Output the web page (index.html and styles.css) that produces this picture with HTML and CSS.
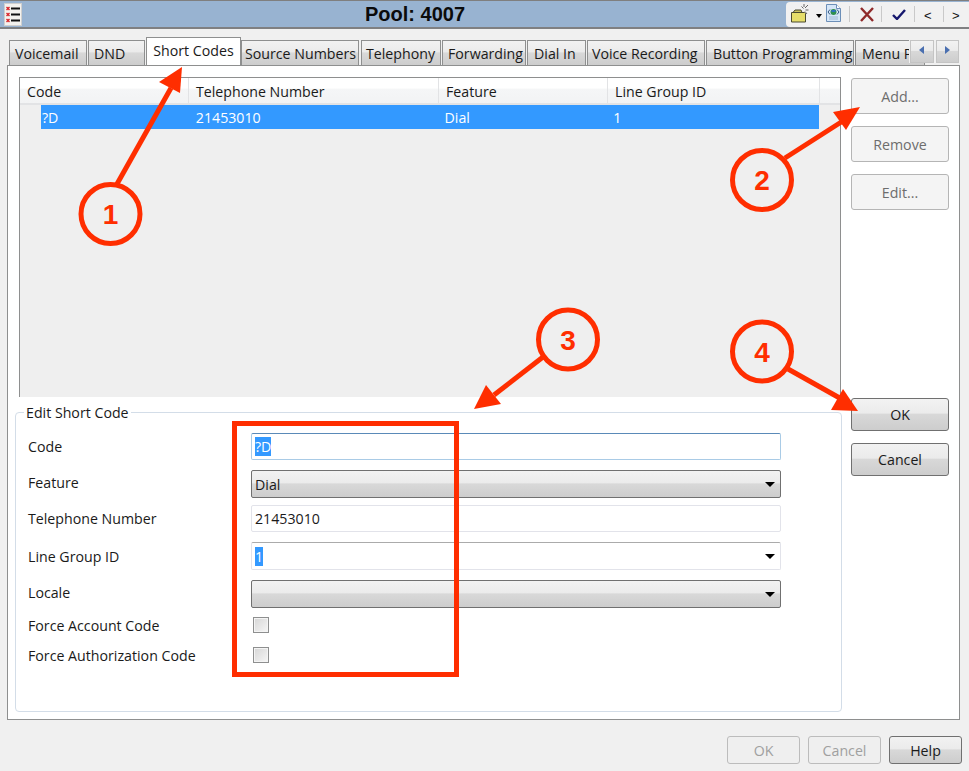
FILE: index.html
```html
<!DOCTYPE html>
<html lang="en">
<head>
<meta charset="utf-8">
<title>Pool: 4007</title>
<link rel="stylesheet" href="styles.css">
</head>
<body>
<div class="window">
  <header class="titlebar">
    <svg class="menu-icon" width="18" height="23" viewBox="0 0 18 23">
      <rect x="0.5" y="0.5" width="17" height="22" fill="#f4f2ee" stroke="#cfcfcf"/>
      <path d="M2.500 4l3 3m0-3l-3 3M2.500 10l3 3m0-3l-3 3M2.500 16l3 3m0-3l-3 3" stroke="#d8262c" stroke-width="1.400" fill="none"/>
      <path d="M7 5.500h9M7 11.500h9M7 17.500h9" stroke="#111" stroke-width="2" fill="none"/>
    </svg>
    <h1 class="title">Pool: 4007</h1>
    <div class="toolbar">
      <svg class="tool-new" width="18" height="20" viewBox="0 0 18 20">
        <path d="M0.500 9.500h13l1 1v8.500h-14z" fill="#e6de6a" stroke="#4a4a30"/>
        <path d="M2 9.500l2-2.500h6l1 2.500z" fill="#c8c060" stroke="#4a4a30"/>
        <path d="M13 1v3M10.500 3.500l2 2M17 2l-3 3M17.500 7h-3M16 11l-2-2.500" stroke="#666" stroke-width="1" fill="none"/>
      </svg>
      <span class="caret caret-tool"></span>
      <svg class="tool-doc" width="15" height="18" viewBox="0 0 15 18">
        <path d="M0.500 0.500h10l4 4v13h-14z" fill="#d5e6f7" stroke="#6c8fb8"/>
        <path d="M10.500 0.500v4h4" fill="#fff" stroke="#6c8fb8"/>
        <circle cx="7.500" cy="8" r="3" fill="#2f8f4e"/>
        <path d="M5.500 6h4v2h-4z" fill="#2a6fc0"/>
        <path d="M4 5.500L2 8l2 2.500M11 5.500L13 8l-2 2.500" stroke="#35577f" fill="none"/>
        <path d="M3 13h9M3 15h9" stroke="#9db7d4" fill="none"/>
      </svg>
      <span class="tool-sep sep-a"></span>
      <svg class="tool-x" width="14" height="15" viewBox="0 0 14 15">
        <path d="M1 1l12 13M13 1L1 14" stroke="#8f2a2a" stroke-width="2.400" fill="none"/>
      </svg>
      <span class="tool-sep sep-b"></span>
      <svg class="tool-check" width="14" height="11" viewBox="0 0 14 11">
        <path d="M1 6l4 4L13 1" stroke="#16186e" stroke-width="2.400" fill="none"/>
      </svg>
      <span class="tool-sep sep-c"></span>
      <span class="tool-nav nav-prev">&lt;</span>
      <span class="tool-sep sep-d"></span>
      <span class="tool-nav nav-next">&gt;</span>
    </div>
  </header>

  <nav class="tabstrip">
    <span class="tab t-voicemail">Voicemail</span>
    <span class="tab t-dnd">DND</span>
    <span class="tab tab-active">Short Codes</span>
    <span class="tab t-source">Source Numbers</span>
    <span class="tab t-tel">Telephony</span>
    <span class="tab t-fwd">Forwarding</span>
    <span class="tab t-dial">Dial In</span>
    <span class="tab t-voice">Voice Recording</span>
    <span class="tab t-button">Button Programming</span>
    <span class="tab t-menu">Menu P</span>
    <div class="tab-scroll">
      <span class="scroll-btn"><i class="tri tri-left"></i></span>
      <span class="scroll-btn"><i class="tri tri-right"></i></span>
    </div>
  </nav>

  <main class="pane">
    <div class="left">
      <section class="list">
        <div class="list-head">
          <span class="col c1">Code</span>
          <span class="col c2">Telephone Number</span>
          <span class="col c3">Feature</span>
          <span class="col c4">Line Group ID</span>
          <span class="col c5"></span>
        </div>
        <div class="list-row">
          <span class="cell c1">?D</span>
          <span class="cell c2">21453010</span>
          <span class="cell c3">Dial</span>
          <span class="cell c4">1</span>
        </div>
      </section>

      <fieldset class="group">
        <legend class="legend">Edit Short Code</legend>
        <div class="row r-code">
          <label class="lbl">Code</label>
          <div class="input input-focus"><span class="sel">?D</span></div>
        </div>
        <div class="row r-feature">
          <label class="lbl lbl-up">Feature</label>
          <div class="select"><span>Dial</span><i class="caret"></i></div>
        </div>
        <div class="row r-tel">
          <label class="lbl">Telephone Number</label>
          <div class="input"><span>21453010</span></div>
        </div>
        <div class="row r-line">
          <label class="lbl">Line Group ID</label>
          <div class="input combo"><span class="sel">1</span><i class="caret"></i></div>
        </div>
        <div class="row r-locale">
          <label class="lbl lbl-up">Locale</label>
          <div class="select"><span></span><i class="caret"></i></div>
        </div>
        <div class="row r-check r-check1">
          <label class="lbl lbl-down">Force Account Code</label>
          <span class="check"></span>
        </div>
        <div class="row r-check r-check2">
          <label class="lbl lbl-down">Force Authorization Code</label>
          <span class="check"></span>
        </div>
      </fieldset>
    </div>

    <aside class="side">
      <button class="btn btn-dim b-add">Add...</button>
      <button class="btn btn-dim b-remove">Remove</button>
      <button class="btn btn-dim b-edit">Edit...</button>
      <button class="btn b-ok">OK</button>
      <button class="btn b-cancel">Cancel</button>
    </aside>
  </main>

  <footer class="footer">
    <button class="btn btn-foot btn-off">OK</button>
    <button class="btn btn-foot btn-off">Cancel</button>
    <button class="btn btn-foot btn-help">Help</button>
  </footer>

  <svg class="notes" width="969" height="771" viewBox="0 0 969 771">
    <g class="note-line">
      <path d="M117 184L171 88"/>
      <path d="M785 158L846 119"/>
      <path d="M543 357L494 395"/>
      <path d="M788 369L845 401"/>
      <rect x="234.500" y="423.500" width="222" height="251"/>
      <circle cx="110.500" cy="214" r="29.500"/>
      <circle cx="762" cy="180" r="29.500"/>
      <circle cx="568" cy="339.500" r="29.500"/>
      <circle cx="762" cy="351.500" r="29.500"/>
    </g>
    <g class="note-head">
      <path d="M182 67L159 82 180 93z"/>
      <path d="M860 107L833 112 846 130z"/>
      <path d="M474 409L486 385 501 404z"/>
      <path d="M858 411L831 410 843 389z"/>
    </g>
    <g class="note-num">
      <text x="110.500" y="224">1</text>
      <text x="762" y="190">2</text>
      <text x="568" y="350">3</text>
      <text x="762" y="362">4</text>
    </g>
  </svg>
</div>
</body>
</html>
```
FILE: styles.css
```css
* { box-sizing: border-box; }
html, body { margin: 0; padding: 0; }
body {
  width: 969px;
  height: 771px;
  overflow: hidden;
  background: #f0f0f0;
  color: #1a1a1a;
  font-family: "Open Sans", "Noto Sans", sans-serif;
  font-size: 14.2px;
}
.window { position: relative; width: 969px; height: 771px; }

/* title bar */
.titlebar {
  position: relative;
  display: flex;
  align-items: center;
  height: 29px;
  padding-left: 4px;
  background: #98b3d1;
  border-top: 1px solid #7f7f7f;
  border-bottom: 2px solid #7f8082;
}
.menu-icon { flex: none; }
.title {
  margin: 0 0 0 343px;
  font: bold 20px "Liberation Sans", Arial, sans-serif;
  color: #0b0b0b;
}
.toolbar {
  display: flex;
  align-items: center;
  height: 25px;
  margin-left: auto;
  width: 183px;
  padding-left: 5px;
  background: #f1f1f1;
  border-radius: 4px 0 0 4px;
}
.tool-new { flex: none; margin-top: -2px; }
.caret {
  display: block;
  width: 0;
  height: 0;
  border-left: 5px solid transparent;
  border-right: 5px solid transparent;
  border-top: 5px solid #000;
}
.caret-tool {
  flex: none;
  margin-left: 7px;
  margin-top: 3px;
  border-left-width: 3.500px;
  border-right-width: 3.500px;
  border-top-width: 4px;
}
.tool-doc { flex: none; margin-left: 4px; margin-top: -2px; }
.tool-sep { width: 1px; height: 16px; background: #c9c9c9; flex: none; }
.sep-a { margin-left: 8px; }
.tool-x { flex: none; margin-left: 10px; }
.sep-b { margin-left: 7px; }
.tool-check { flex: none; margin-left: 10px; }
.sep-c { margin-left: 8px; }
.tool-nav {
  flex: none;
  width: 8px;
  margin-top: 2px;
  font: 13px "Liberation Sans", Arial, sans-serif;
  color: #111;
}
.nav-prev { margin-left: 9px; }
.sep-d { margin-left: 11px; }
.nav-next { margin-left: 8px; }

/* tabs */
.tabstrip {
  position: relative;
  display: flex;
  align-items: flex-end;
  gap: 1px;
  height: 36px;
  padding-left: 9px;
  overflow: hidden;
  width: 960px;
}
.tab {
  flex: none;
  display: flex;
  align-items: center;
  height: 25px;
  white-space: nowrap;
  background: linear-gradient(#f2f2f2 0, #ebebeb 45%, #d8d8d8 50%, #cdcdcd 100%);
  border: 1px solid #8e8f8f;
  border-bottom: 0;
  color: #1a1a1a;
}
.t-voicemail { width: 78px; padding-left: 5px; }
.t-dnd { width: 57px; padding-left: 5px; }
.tab-active {
  justify-content: center;
  width: 95px;
  height: 28px;
  background: #fff;
  padding-bottom: 2px;
}
.t-source { width: 118px; margin-left: -1px; padding-left: 3px; }
.t-tel { width: 80px; margin-left: 1px; padding-left: 4px; }
.t-fwd { width: 84px; padding-left: 5px; }
.t-dial { width: 59px; padding-left: 6px; }
.t-voice { width: 118px; padding-left: 4px; }
.t-button { width: 148px; padding-left: 6px; }
.t-menu { width: 70px; padding-left: 6px; }
.tab-scroll {
  position: absolute;
  right: 0;
  top: 11px;
  display: flex;
  gap: 2px;
  height: 23px;
  width: 51px;
  padding: 0 1px;
  background: #f0f0f0;
}
.scroll-btn {
  flex: 1;
  display: flex;
  align-items: center;
  justify-content: center;
  padding-bottom: 4px;
  background: linear-gradient(#f2f2f2 0, #ebebeb 45%, #d8d8d8 50%, #cdcdcd 100%);
  border: 1px solid #c4c4c4;
}
.tri { display: block; width: 0; height: 0; border-top: 4px solid transparent; border-bottom: 4px solid transparent; }
.tri-left { border-right: 5px solid #4a6fb0; }
.tri-right { border-left: 5px solid #4a6fb0; }

/* pane */
.pane {
  display: flex;
  width: 953px;
  height: 655px;
  margin-left: 7px;
  padding: 11px 0 0 7px;
  background: #fff;
  border: 1px solid #8e8f8f;
}
.left { width: 827px; flex: none; }
.list {
  width: 822px;
  height: 320px;
  margin-left: 4px;
  background: #efefef;
  border: 1px solid #8e8f8f;
  border-width: 1px 1px 0 1px;
}
.list-head {
  display: flex;
  height: 27px;
  background: linear-gradient(#fff 0, #fff 40%, #f5f6f7 45%, #f2f3f4 100%);
  border-bottom: 2px solid #e2e3e5;
}
.col {
  display: flex;
  align-items: center;
  padding: 2px 0 0 7px;
  border-right: 1px solid #e2e3e5;
}
.list-head .c1, .list-row .c1 { width: 169px; }
.list-head .c2, .list-row .c2 { width: 250px; }
.list-head .c3, .list-row .c3 { width: 169px; }
.list-head .c4, .list-row .c4 { width: 212px; }
.c5 { flex: 1; border-right: 0; }
.list-row {
  display: flex;
  align-items: center;
  height: 24px;
  margin-left: 21px;
  width: 778px;
  background: #3399ff;
  color: #fff;
}
.cell { padding-left: 6px; }
.list-row .c1 { width: 148px; padding-left: 1px; }
.list-row .c2 { width: 250px; padding-left: 7px; }
.list-row .c3 { padding-left: 6px; }

/* group */
.group {
  margin: 5px 0 0;
  padding: 0 0 0 12px;
  height: 310px;
  min-width: 0;
  border: 1px solid #d3dde8;
  border-radius: 4px;
}
.legend { margin-left: -4px; padding: 2px 2px 0; line-height: 18px; color: #1a1a1a; }
.row { display: flex; align-items: center; }
.lbl { width: 223px; flex: none; }
.lbl-up { padding-bottom: 3px; }
.lbl-down { padding-top: 2px; }
.r-code { margin-top: 11px; }
.r-feature { margin-top: 10px; }
.r-tel { margin-top: 7px; }
.r-line { margin-top: 10px; }
.r-locale { margin-top: 10px; }
.r-check { height: 19px; }
.r-check1 { margin-top: 7px; }
.r-check2 { margin-top: 11px; }
.input, .select {
  display: flex;
  align-items: center;
  width: 530px;
  padding-left: 3px;
  border-radius: 2px;
}
.input {
  height: 27px;
  background: #fff;
  border: 1px solid #e2e3ea;
  border-top-color: #ababab;
}
.r-tel .input { border-top-color: #e2e3ea; }
.input-focus { border: 1px solid #a9cbe6; border-top-color: #5a8ab8; }
.combo { height: 28px; justify-content: space-between; }
.select {
  justify-content: space-between;
  height: 28px;
  background: linear-gradient(#f2f2f2 0, #ebebeb 45%, #d8d8d8 50%, #cdcdcd 100%);
  border: 1px solid #707070;
}
.input .caret, .select .caret { margin-right: 5px; }
.sel { background: #3399ff; color: #fff; }
.check {
  display: block;
  width: 16px;
  height: 16px;
  margin-left: 2px;
  background: linear-gradient(135deg, #d6d6d6, #f6f6f6);
  border: 1px solid #8e8f8f;
  box-shadow: inset 0 0 0 1px #f4f4f4;
}

/* buttons */
.side { display: flex; flex-direction: column; margin-left: 9px; width: 98px; }
.btn {
  display: flex;
  align-items: center;
  justify-content: center;
  width: 98px;
  padding: 0;
  font: inherit;
  color: #1a1a1a;
  background: linear-gradient(#f2f2f2 0, #ebebeb 45%, #d8d8d8 50%, #cdcdcd 100%);
  border: 1px solid #707070;
  border-radius: 3px;
}
.btn-dim { height: 36px; background: #f4f4f4; border-color: #b5b5b5; color: #6d6d6d; }
.b-add { margin-top: 1px; }
.b-remove { margin-top: 12px; }
.b-edit { margin-top: 12px; }
.b-ok { height: 33px; margin-top: 188px; }
.b-cancel { height: 33px; margin-top: 12px; }

.footer {
  display: flex;
  justify-content: flex-end;
  gap: 8px;
  padding: 16px 7px 0 0;
}
.btn-foot { width: 73px; height: 28px; }
.btn-off { background: #efefef; border-color: #bcbcbc; color: #a0a0a0; }

/* annotations */
.notes { position: absolute; left: 0; top: 0; pointer-events: none; }
.note-line path, .note-line rect, .note-line circle { fill: none; stroke: #ff2e00; stroke-width: 5; }
.note-head path { fill: #ff2e00; }
.note-num text {
  fill: #ff2e00;
  font: bold 28px "Liberation Sans", Arial, sans-serif;
  text-anchor: middle;
}
```
